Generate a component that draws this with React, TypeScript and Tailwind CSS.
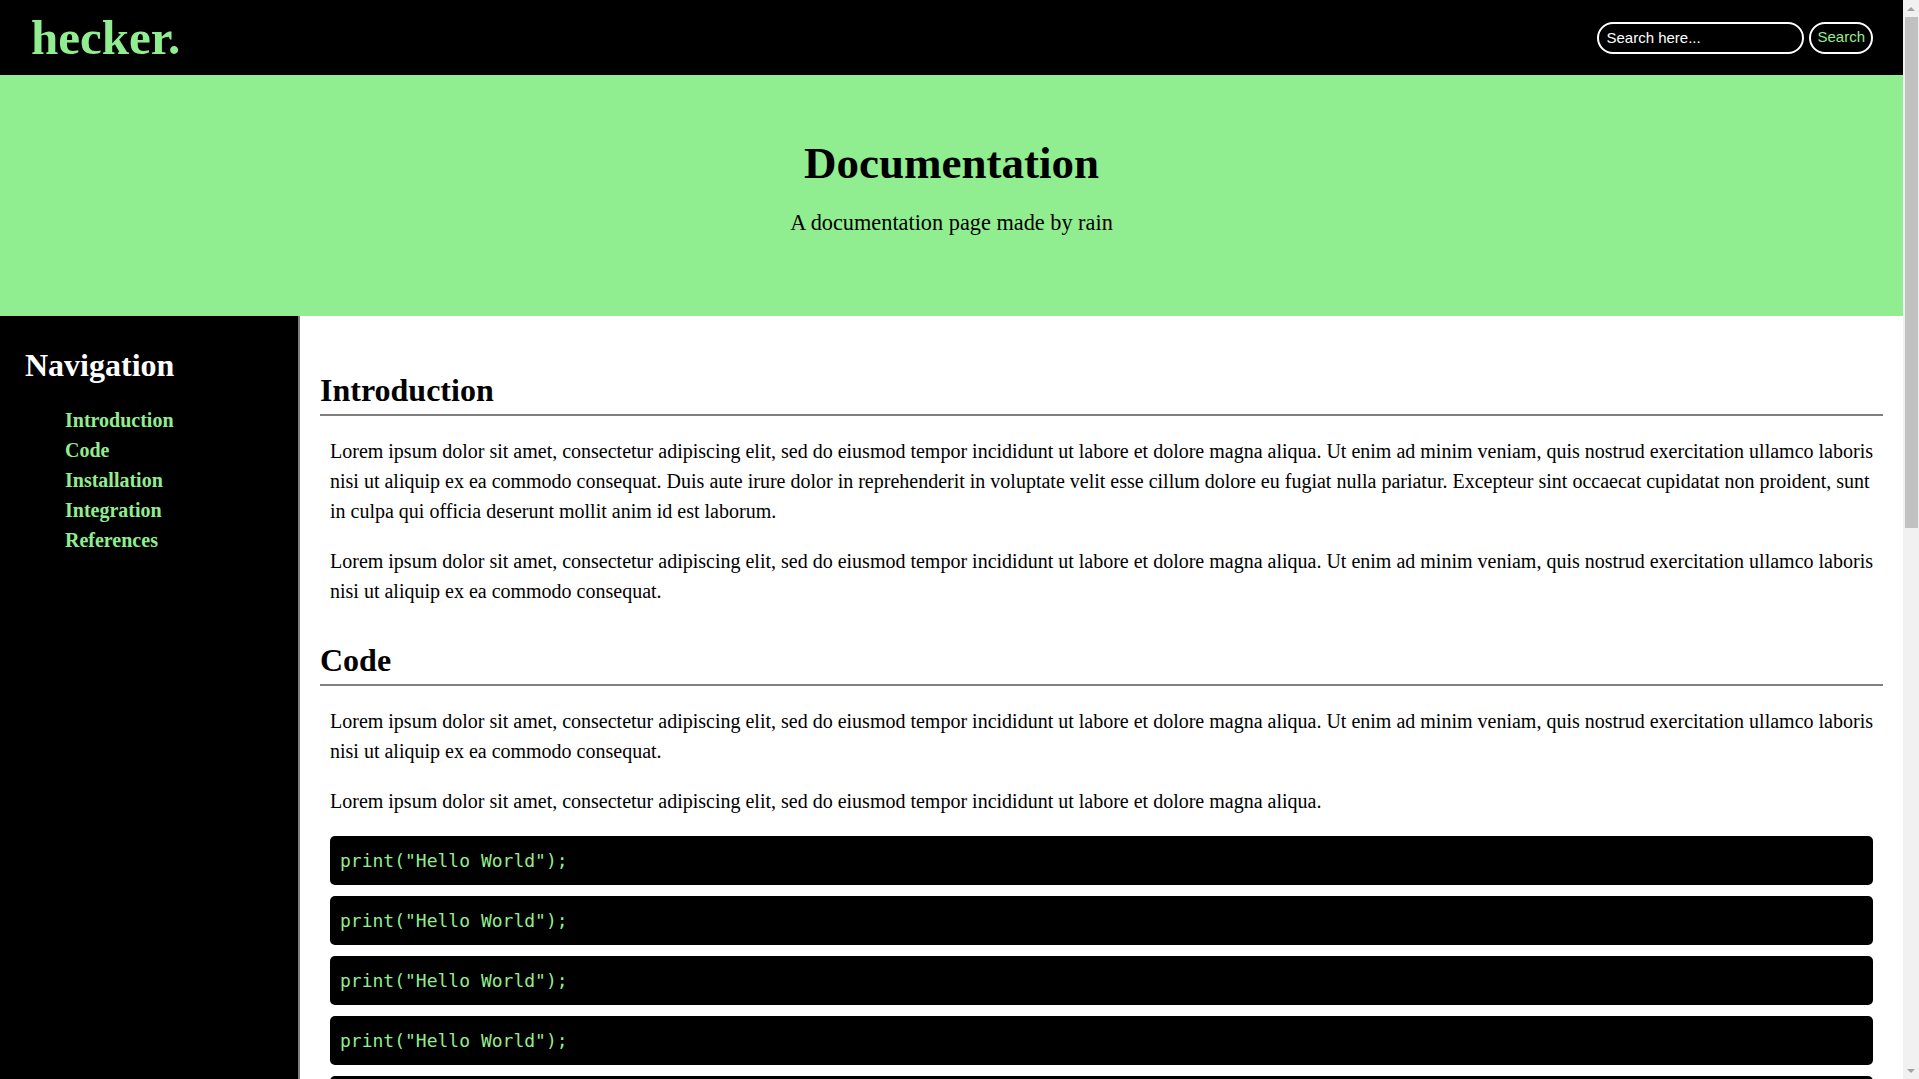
const lorem =
    'Lorem ipsum dolor sit amet, consectetur adipiscing elit, sed do eiusmod tempor incididunt ut labore et dolore magna aliqua.';
const loremLong =
    lorem +
    ' Ut enim ad minim veniam, quis nostrud exercitation ullamco laboris nisi ut aliquip ex ea commodo consequat.';
const loremFull =
    loremLong +
    ' Duis aute irure dolor in reprehenderit in voluptate velit esse cillum dolore eu fugiat nulla pariatur. Excepteur sint occaecat cupidatat non proident, sunt in culpa qui officia deserunt mollit anim id est laborum.';

const navLinks = [
    { id: 'introduction', label: 'Introduction' },
    { id: 'code', label: 'Code' },
    { id: 'installation', label: 'Installation' },
    { id: 'integration', label: 'Integration' },
    { id: 'references', label: 'References' }
];

const Section = ({ id, title, children }: { id: string; title: string; children: React.ReactNode }) => (
    <section id={id}>
        <h2 className="mt-[36px] pb-[5px] border-b-2 border-[#808080] text-[32px] leading-[37px] font-bold">
            {title}
        </h2>
        {children}
    </section>
);

const Para = ({ children }: { children: React.ReactNode }) => (
    <p className="mt-[20px] mx-[10px] text-[20px] leading-[30px]">{children}</p>
);

const CodeBlock = () => (
    <pre className="mx-[10px] mb-[11px] h-[49px] flex items-center px-[10px] bg-black rounded-[5px] text-[#90ee90] text-[18px] font-['DejaVu_Sans_Mono',monospace]">
        print("Hello World");
    </pre>
);

const CodeList = ({ count }: { count: number }) => (
    <div className="mt-[20px]">
        {Array.from({ length: count }, (_, i) => (
            <CodeBlock key={i} />
        ))}
    </div>
);

// window scrollbar as it appears in the screenshot
const Scrollbar = () => (
    <div className="fixed top-0 right-0 w-[16px] h-screen bg-[#f1f1f1] flex flex-col">
        <div className="h-[17px] flex items-center justify-center">
            <svg width="8" height="4" viewBox="0 0 8 4">
                <path d="M0 4 L4 0 L8 4 Z" fill="#a3a3a3" />
            </svg>
        </div>
        <div className="flex-1 pl-[2px] pr-[1px]">
            <div className="h-[511px] bg-[#c1c1c1]" />
        </div>
        <div className="h-[17px] flex items-center justify-center">
            <svg width="8" height="4" viewBox="0 0 8 4">
                <path d="M0 0 L8 0 L4 4 Z" fill="#a3a3a3" />
            </svg>
        </div>
    </div>
);

export default function App() {
    return (
        <div className="bg-white text-black font-['Liberation_Serif','Times_New_Roman',serif]">
            <div className="mr-[16px]">
                <header className="h-[75px] bg-black flex items-center justify-between pl-[31px] pr-[30px]">
                    <h1 className="text-[49px] leading-none font-bold text-[#90ee90]">hecker.</h1>
                    <form className="flex items-center gap-[5px] font-['Liberation_Sans',Arial,sans-serif]">
                        <input
                            type="text"
                            placeholder="Search here..."
                            className="w-[207px] h-[32px] px-[7px] rounded-full border-2 border-white bg-black text-white text-[15px] placeholder:text-white outline-none"
                        />
                        <button
                            type="button"
                            className="h-[32px] px-[6px] rounded-full border-2 border-white bg-black text-[#90ee90] text-[15px]"
                        >
                            Search
                        </button>
                    </form>
                </header>

                <div className="h-[241px] bg-[#90ee90] text-center pt-[62px]">
                    <h1 className="text-[45px] leading-[52px] font-bold">Documentation</h1>
                    <p className="mt-[21px] text-[22.3px] leading-[25px]">A documentation page made by rain</p>
                </div>

                <div className="flex">
                    <nav className="w-[300px] shrink-0 bg-black border-r-2 border-[#808080] pt-[31px] pl-[25px]">
                        <h2 className="text-[32px] leading-[37px] font-bold text-white">Navigation</h2>
                        <ul className="mt-[21px] pl-[40px]">
                            {navLinks.map(link => (
                                <li key={link.id}>
                                    <a href={`#${link.id}`} className="text-[20px] leading-[30px] font-bold text-[#90ee90]">
                                        {link.label}
                                    </a>
                                </li>
                            ))}
                        </ul>
                    </nav>

                    <main className="flex-1 min-w-0 px-[20px] pt-[20px] pb-[80px]">
                        <Section id="introduction" title="Introduction">
                            <Para>{loremFull}</Para>
                            <Para>{loremLong}</Para>
                        </Section>

                        <Section id="code" title="Code">
                            <Para>{loremLong}</Para>
                            <Para>{lorem}</Para>
                            <CodeList count={6} />
                        </Section>

                        <Section id="installation" title="Installation">
                            <Para>{loremFull}</Para>
                            <Para>{loremLong}</Para>
                            <CodeList count={2} />
                        </Section>

                        <Section id="integration" title="Integration">
                            <Para>{loremFull}</Para>
                            <Para>{loremLong}</Para>
                        </Section>

                        <Section id="references" title="References">
                            <Para>{loremLong}</Para>
                            <Para>{loremFull}</Para>
                        </Section>
                    </main>
                </div>
            </div>
            <Scrollbar />
        </div>
    );
}
